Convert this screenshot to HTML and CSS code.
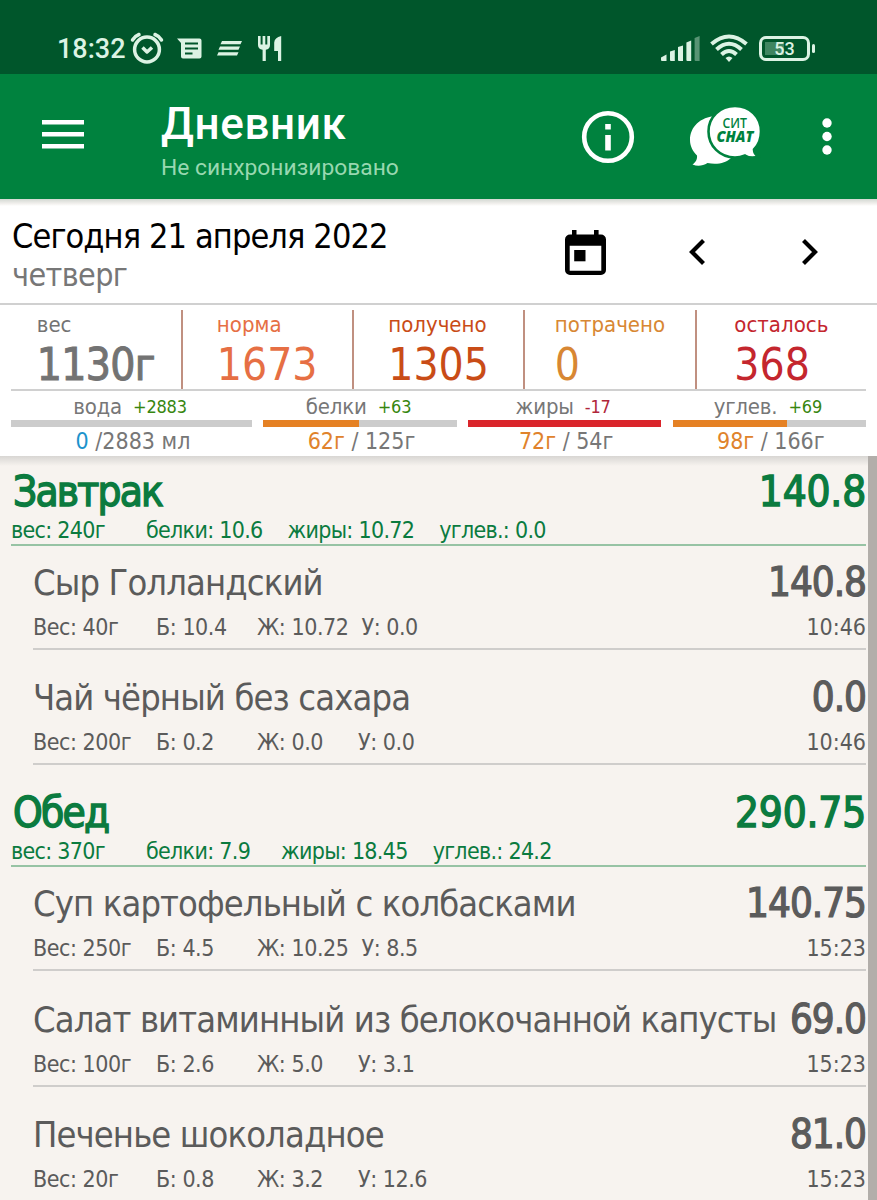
FILE: index.html
```html
<!DOCTYPE html>
<html lang="ru">

<head>
    <meta charset="UTF-8" />
    <meta name="viewport" content="width=device-width, initial-scale=1.0" />
    <title>Дневник</title>
    <link rel="stylesheet" href="styles.css">
</head>

<body>
    <div id="status-bar">
        <span class="clock">18:32</span>
        <svg class="ic-alarm" width="34" height="32" viewBox="0 0 34 32" fill="none" stroke="#dcf3e4" stroke-width="3.500">
            <circle cx="17" cy="17.500" r="12.400" />
            <path d="M2.500 8Q5 4 9 2.500M31.500 8Q29 4 25 2.500" stroke-linecap="round" />
            <path d="M12.500 15.500l4.500 4.500 5-4.500" stroke-linejoin="round" />
        </svg>
        <svg class="ic-note" width="25" height="21" viewBox="0 0 25 21">
            <path fill="#dcf3e4" d="M0 0.500h22.500a2 2 0 0 1 2 2v16a2 2 0 0 1-2 2H6a2 2 0 0 1-2-2V5z" />
            <path stroke="#00562b" stroke-width="2" d="M8 5.500h13M8 10.500h13M8 15.500h7.500" />
        </svg>
        <svg class="ic-lines" width="25" height="15" viewBox="0 0 25 15" fill="#dcf3e4">
            <path d="M5 0h20l-1.500 3.200h-20zM3 5.600h20l-1.500 3.200h-20zM1.500 11.200h20L20 14.400H0z" />
        </svg>
        <svg class="ic-food" width="24" height="25" viewBox="0 0 24 25" fill="#dcf3e4">
            <path d="M0 0h2.600v8.500h2V0h2.700v8.500h2V0H12v9q0 4-4.200 4.800V25H4.600V13.800Q0 13 0 9z" />
            <path d="M23.200 0v25H20V15h-3.800V6.500Q16.500 1.500 23.200 0z" />
        </svg>
        <span class="spacer"></span>
        <svg class="ic-signal" width="39" height="25" viewBox="0 0 39 25" fill="#dcf3e4">
            <path d="M0 21.500l5.500-3V25H1a1 1 0 0 1-1-1z" />
            <path d="M9 15.500l4.800-1.500v11H10a1 1 0 0 1-1-1z" />
            <path d="M17 11l5-1.600V25h-4a1 1 0 0 1-1-1z" />
            <path d="M25.400 6.500l4.800-2V25h-3.800a1 1 0 0 1-1-1z" />
            <path opacity=".4" d="M33.600 2l5-2v25h-4a1 1 0 0 1-1-1z" />
        </svg>
        <svg class="ic-wifi" width="38" height="28" viewBox="0 0 38 28" fill="none" stroke="#dcf3e4" stroke-width="4">
            <path d="M1.500 10Q19-5 36.500 10" />
            <path d="M6.500 15.500Q19 4 31.500 15.500" />
            <path d="M11.500 20.500Q19 13.500 26.500 20.500" />
            <path fill="#dcf3e4" stroke="none" d="M15.500 24q3.500-3 7 0l-3.500 4z" />
        </svg>
        <div class="battery"><span>53</span></div>
    </div>

    <div id="toolbar">
        <svg class="ic-menu" width="42" height="29" viewBox="0 0 42 29" fill="#fff">
            <path d="M0 0h42v4.600H0zM0 12h42v4.600H0zM0 24h42v4.600H0z" />
        </svg>
        <div class="toolbar-text">
            <h1>Дневник</h1>
            <p>Не синхронизировано</p>
        </div>
        <svg class="ic-info" width="54" height="54" viewBox="0 0 54 54">
            <circle cx="27" cy="27" r="23.800" fill="none" stroke="#fff" stroke-width="4.600" />
            <path fill="#fff" d="M24.200 14h5.600v5.400h-5.600zM24.200 25h5.600v15.500h-5.600z" />
        </svg>
        <svg class="ic-chat" width="71" height="60" viewBox="0 0 71 60">
            <path fill="#fff" d="M26 9C10 10 0 20 0 33c0 6 2.500 11 7 15.500 .5 4-1.500 7-4.500 9 5 2 10 1.500 15-1.500C27 58 36 56 41 51 50 30 26 9 26 9z" />
            <path fill="#fff" stroke="#00823e" stroke-width="2.600" d="M45 -1C30-1 18.500 10 18.500 24.500S30 50.500 45 50.500c4 0 7-.8 10-2 4 2.500 8 3 13.500 1-3-1.500-4.500-3.500-4.500-7C68.500 38 71 32 71 24.500 71 10 60-1 45-1z" />
            <text x="32.500" y="20.500" class="chat-top" textLength="24.500" lengthAdjust="spacingAndGlyphs">СИТ</text>
            <text x="26.500" y="34.500" class="chat-bottom" textLength="37" lengthAdjust="spacingAndGlyphs">CHAT</text>
        </svg>
        <svg class="ic-more" width="10" height="38" viewBox="0 0 10 38" fill="#fff">
            <circle cx="5" cy="5" r="4.700" />
            <circle cx="5" cy="18.500" r="4.700" />
            <circle cx="5" cy="32" r="4.700" />
        </svg>
    </div>

    <div id="date-bar">
        <div class="date-text">
            <div class="date">Сегодня 21 апреля 2022</div>
            <div class="weekday">четверг</div>
        </div>
        <svg class="ic-calendar" width="41" height="45" viewBox="0 0 41 45">
            <path fill-rule="evenodd" d="M7 0h4.500v4.500h17.500V0h4.600v4.500H36a5 5 0 0 1 5 5V40a5 5 0 0 1-5 5H5a5 5 0 0 1-5-5V9.500a5 5 0 0 1 5-5h2zM4.700 15.700v25h31.600v-25z" />
            <path d="M9.200 20h11.300v11.300H9.200z" />
        </svg>
        <svg class="ic-prev" width="17" height="28" viewBox="0 0 17 28" fill="none" stroke="#000" stroke-width="4.200">
            <path d="M14.500 2.500L3 14l11.500 11.500" />
        </svg>
        <svg class="ic-next" width="17" height="28" viewBox="0 0 17 28" fill="none" stroke="#000" stroke-width="4.200">
            <path d="M2.500 2.500L14 14 2.500 25.500" />
        </svg>
    </div>

    <div id="stats">
        <div class="stat weight"><div><span>вес</span><b>1130г</b></div></div>
        <div class="stat norm"><div><span>норма</span><b>1673</b></div></div>
        <div class="stat got"><div><span>получено</span><b>1305</b></div></div>
        <div class="stat spent"><div><span>потрачено</span><b>0</b></div></div>
        <div class="stat left"><div><span>осталось</span><b>368</b></div></div>
    </div>

    <div id="macros">
        <div class="macro water">
            <div class="macro-name">вода <i>+2883</i></div>
            <div class="bar"></div>
            <div class="macro-value"><em>0</em> /2883 мл</div>
        </div>
        <div class="macro">
            <div class="macro-name">белки <i>+63</i></div>
            <div class="bar"><div style="width:49.6%"></div></div>
            <div class="macro-value"><em>62г</em> / 125г</div>
        </div>
        <div class="macro over">
            <div class="macro-name">жиры <i>-17</i></div>
            <div class="bar"><div style="width:100%"></div></div>
            <div class="macro-value"><em>72г</em> / 54г</div>
        </div>
        <div class="macro">
            <div class="macro-name">углев. <i>+69</i></div>
            <div class="bar"><div style="width:59%"></div></div>
            <div class="macro-value"><em>98г</em> / 166г</div>
        </div>
    </div>

    <div id="diary">
        <div class="meal">
            <div class="meal-title"><span>Завтрак</span><span class="kcal">140.8</span></div>
            <div class="meal-info"><span>вес: 240г</span><span>белки: 10.6</span><span>жиры: 10.72</span><span>углев.: 0.0</span></div>
        </div>
        <div class="food">
            <div class="food-title"><span>Сыр Голландский</span><b>140.8</b></div>
            <div class="food-info"><span>Вес: 40г</span><span>Б: 10.4</span><span>Ж: 10.72</span><span>У: 0.0</span><time>10:46</time></div>
        </div>
        <div class="food">
            <div class="food-title"><span>Чай чёрный без сахара</span><b>0.0</b></div>
            <div class="food-info"><span>Вес: 200г</span><span>Б: 0.2</span><span>Ж: 0.0</span><span>У: 0.0</span><time>10:46</time></div>
        </div>

        <div class="meal">
            <div class="meal-title"><span>Обед</span><span class="kcal">290.75</span></div>
            <div class="meal-info"><span>вес: 370г</span><span>белки: 7.9</span><span>жиры: 18.45</span><span>углев.: 24.2</span></div>
        </div>
        <div class="food">
            <div class="food-title"><span>Суп картофельный с колбасками</span><b>140.75</b></div>
            <div class="food-info"><span>Вес: 250г</span><span>Б: 4.5</span><span>Ж: 10.25</span><span>У: 8.5</span><time>15:23</time></div>
        </div>
        <div class="food">
            <div class="food-title"><span>Салат витаминный из белокочанной капусты</span><b>69.0</b></div>
            <div class="food-info"><span>Вес: 100г</span><span>Б: 2.6</span><span>Ж: 5.0</span><span>У: 3.1</span><time>15:23</time></div>
        </div>
        <div class="food">
            <div class="food-title"><span>Печенье шоколадное</span><b>81.0</b></div>
            <div class="food-info"><span>Вес: 20г</span><span>Б: 0.8</span><span>Ж: 3.2</span><span>У: 12.6</span><time>15:23</time></div>
        </div>
    </div>
</body>

</html>
```
FILE: styles.css
```css
/*  ====== Общее ====== */
* {
    box-sizing: border-box;
}

body {
    margin: 0;
    height: 1200px;
    overflow: hidden;
    display: flex;
    flex-direction: column;
    font-family: 'DejaVu Sans Condensed', 'DejaVu Sans', sans-serif;
    font-stretch: condensed;
    white-space: nowrap;
    background: #fff;
}

svg {
    flex-shrink: 0;
    display: block;
}

b,
i,
em {
    font-weight: normal;
    font-style: normal;
}

/*  ====== Строка состояния ====== */
#status-bar {
    height: 74px;
    flex-shrink: 0;
    display: flex;
    align-items: center;
    padding: 22px 67px 0 57px;
    background: #00562b;
    color: #dcf3e4;
    font-family: Roboto, sans-serif;
    font-stretch: normal;
}

.clock {
    width: 73px;
    padding-top: 2px;
    font-size: 27px;
    font-weight: 500;
}

.ic-note {
    margin-left: 13px;
}

.ic-lines {
    margin-left: 15px;
}

.ic-food {
    margin-left: 16px;
}

.spacer {
    flex: 1;
}

.ic-wifi {
    margin-left: 10px;
}

.battery {
    position: relative;
    width: 51px;
    height: 25px;
    margin-left: 11px;
    border: 3px solid #dcf3e4;
    border-radius: 7px;
    background: linear-gradient(90deg, #3f8560 50%, transparent 50%) 3px 3px / 39px 13px no-repeat;
    font-size: 18px;
    font-weight: 500;
    line-height: 20px;
    text-align: center;
}

.battery::after {
    content: '';
    position: absolute;
    right: -8px;
    top: 5px;
    width: 3px;
    height: 9px;
    border-radius: 2px;
    background: #dcf3e4;
}

/*  ====== Шапка ====== */
#toolbar {
    height: 125px;
    flex-shrink: 0;
    display: flex;
    align-items: center;
    padding: 0 45px 0 42px;
    background: #00823e;
    color: #fff;
    font-family: Roboto, sans-serif;
    font-stretch: normal;
}

.ic-menu {
    margin-top: -4px;
}

.toolbar-text {
    flex: 1;
    margin-left: 77px;
}

.toolbar-text h1 {
    margin: 7px 0 0;
    font-size: 44px;
    font-weight: 500;
    line-height: 50px;
    letter-spacing: .6px;
}

.toolbar-text p {
    margin: 5px 0 0;
    font-size: 22.800px;
    line-height: 28px;
    color: #98d8b0;
}

.ic-chat {
    margin-left: 55px;
}

.ic-more {
    margin-left: 61px;
}

.chat-top {
    font: 600 15px 'Open Sans', sans-serif;
    fill: #00823e;
}

.chat-bottom {
    font: italic 800 16px 'Open Sans', sans-serif;
    fill: #00823e;
}

/*  ====== Дата ====== */
#date-bar {
    height: 106px;
    flex-shrink: 0;
    display: flex;
    align-items: center;
    padding: 2px 59px 0 12px;
    border-bottom: 2px solid #d0d0d0;
    background: linear-gradient(#d3d8d2, #f4f2f0 5px, #fff 7px);
}

.date-text {
    flex: 1;
    padding-top: 5px;
}

.date {
    font-size: 34px;
    line-height: 40px;
    letter-spacing: -.9px;
}

.weekday {
    font-size: 32px;
    line-height: 38px;
    letter-spacing: -.6px;
    color: #777;
}

.ic-prev {
    margin-left: 83px;
}

.ic-next {
    margin-left: 95px;
}

/*  ====== Калории ====== */
#stats {
    height: 86px;
    flex-shrink: 0;
    display: grid;
    grid-template-columns: 171.500px repeat(3, 171.400px) 1fr;
    margin: 0 11px;
    padding: 5px 0 2px;
    border-bottom: 2px solid #d0d0d0;
}

.stat {
    display: flex;
    justify-content: center;
    border-right: 2px solid #c09080;
}

.stat:last-child {
    border-right: none;
}

.stat span,
.stat b {
    display: block;
}

.stat span {
    font-size: 22px;
    line-height: 30px;
}

.stat b {
    font-size: 44px;
    line-height: 49px;
}

.weight {
    color: #737373;
}

.weight b {
    letter-spacing: -.7px;
    -webkit-text-stroke: 1px;
}

.norm {
    color: #e66f44;
}

.got {
    color: #c94c17;
}

.spent {
    color: #d88733;
}

.left {
    color: #c4262e;
}

/*  ====== Вода и БЖУ ====== */
#macros {
    height: 65px;
    flex-shrink: 0;
    display: grid;
    grid-template-columns: 241px 1fr 1fr 1fr;
    gap: 11.300px;
    margin: 0 11px;
    color: #777;
    text-align: center;
}

.macro-name {
    height: 29px;
    padding-right: 3px;
    font-size: 22px;
    line-height: 31px;
    letter-spacing: -.2px;
}

.macro-name i {
    margin-left: 5px;
    font-size: 18px;
    vertical-align: 1px;
    color: #37860f;
}

.over .macro-name i {
    color: #b0263a;
}

.bar {
    height: 7px;
    background: #ccc;
}

.bar div {
    height: 100%;
    background: #e58124;
}

.over .bar div {
    background: #da252b;
}

.macro-value {
    padding-left: 3px;
    font-size: 23px;
    line-height: 29px;
}

.macro-value em {
    color: #e0832c;
}

.water .macro-value em {
    color: #1c93cc;
}

/*  ====== Дневник ====== */
#diary {
    flex: 1;
    overflow: hidden;
    padding: 0 2px 0 11px;
    border-right: 9px solid #b2aeaa;
    background: linear-gradient(#d8d6d3, #f7f3ef 10px);
    color: #5b5b5b;
}

.meal {
    padding-top: 11px;
    border-bottom: 2px solid #97c3a4;
    color: #0b7b3f;
}

.food + .meal {
    margin-top: 12px;
}

.meal-title {
    display: flex;
    justify-content: space-between;
    padding-left: 2px;
    font-size: 42px;
    line-height: 50px;
    letter-spacing: -1.800px;
    -webkit-text-stroke: 1.400px;
}

.meal-title .kcal {
    letter-spacing: -.2px;
}

.meal-info {
    display: flex;
    font-size: 23px;
    line-height: 27px;
    letter-spacing: -.7px;
}

.meal-info span {
    margin-right: 25px;
}

.meal-info span:first-child {
    width: 110px;
}

.meal-info span:nth-child(2) {
    min-width: 110px;
}

.food {
    margin-left: 22px;
    padding-top: 14px;
    border-bottom: 2px solid #cfcdcb;
}

.food + .food {
    margin-top: 11.300px;
}

.food-title {
    display: flex;
    justify-content: space-between;
    height: 46px;
    font-size: 36px;
    line-height: 46px;
    letter-spacing: -.88px;
}

.food-title b {
    font-size: 40px;
    line-height: 44px;
    letter-spacing: -1px;
    -webkit-text-stroke: 1.200px;
}

.food-info {
    display: flex;
    font-size: 23px;
    line-height: 42px;
    letter-spacing: -.45px;
}

.food-info span:first-child {
    width: 123px;
}

.food-info span:nth-child(2) {
    width: 101px;
}

.food-info span:nth-child(3) {
    min-width: 101px;
    padding-right: 13px;
}

.food-info time {
    margin-left: auto;
    letter-spacing: 0;
}
```
